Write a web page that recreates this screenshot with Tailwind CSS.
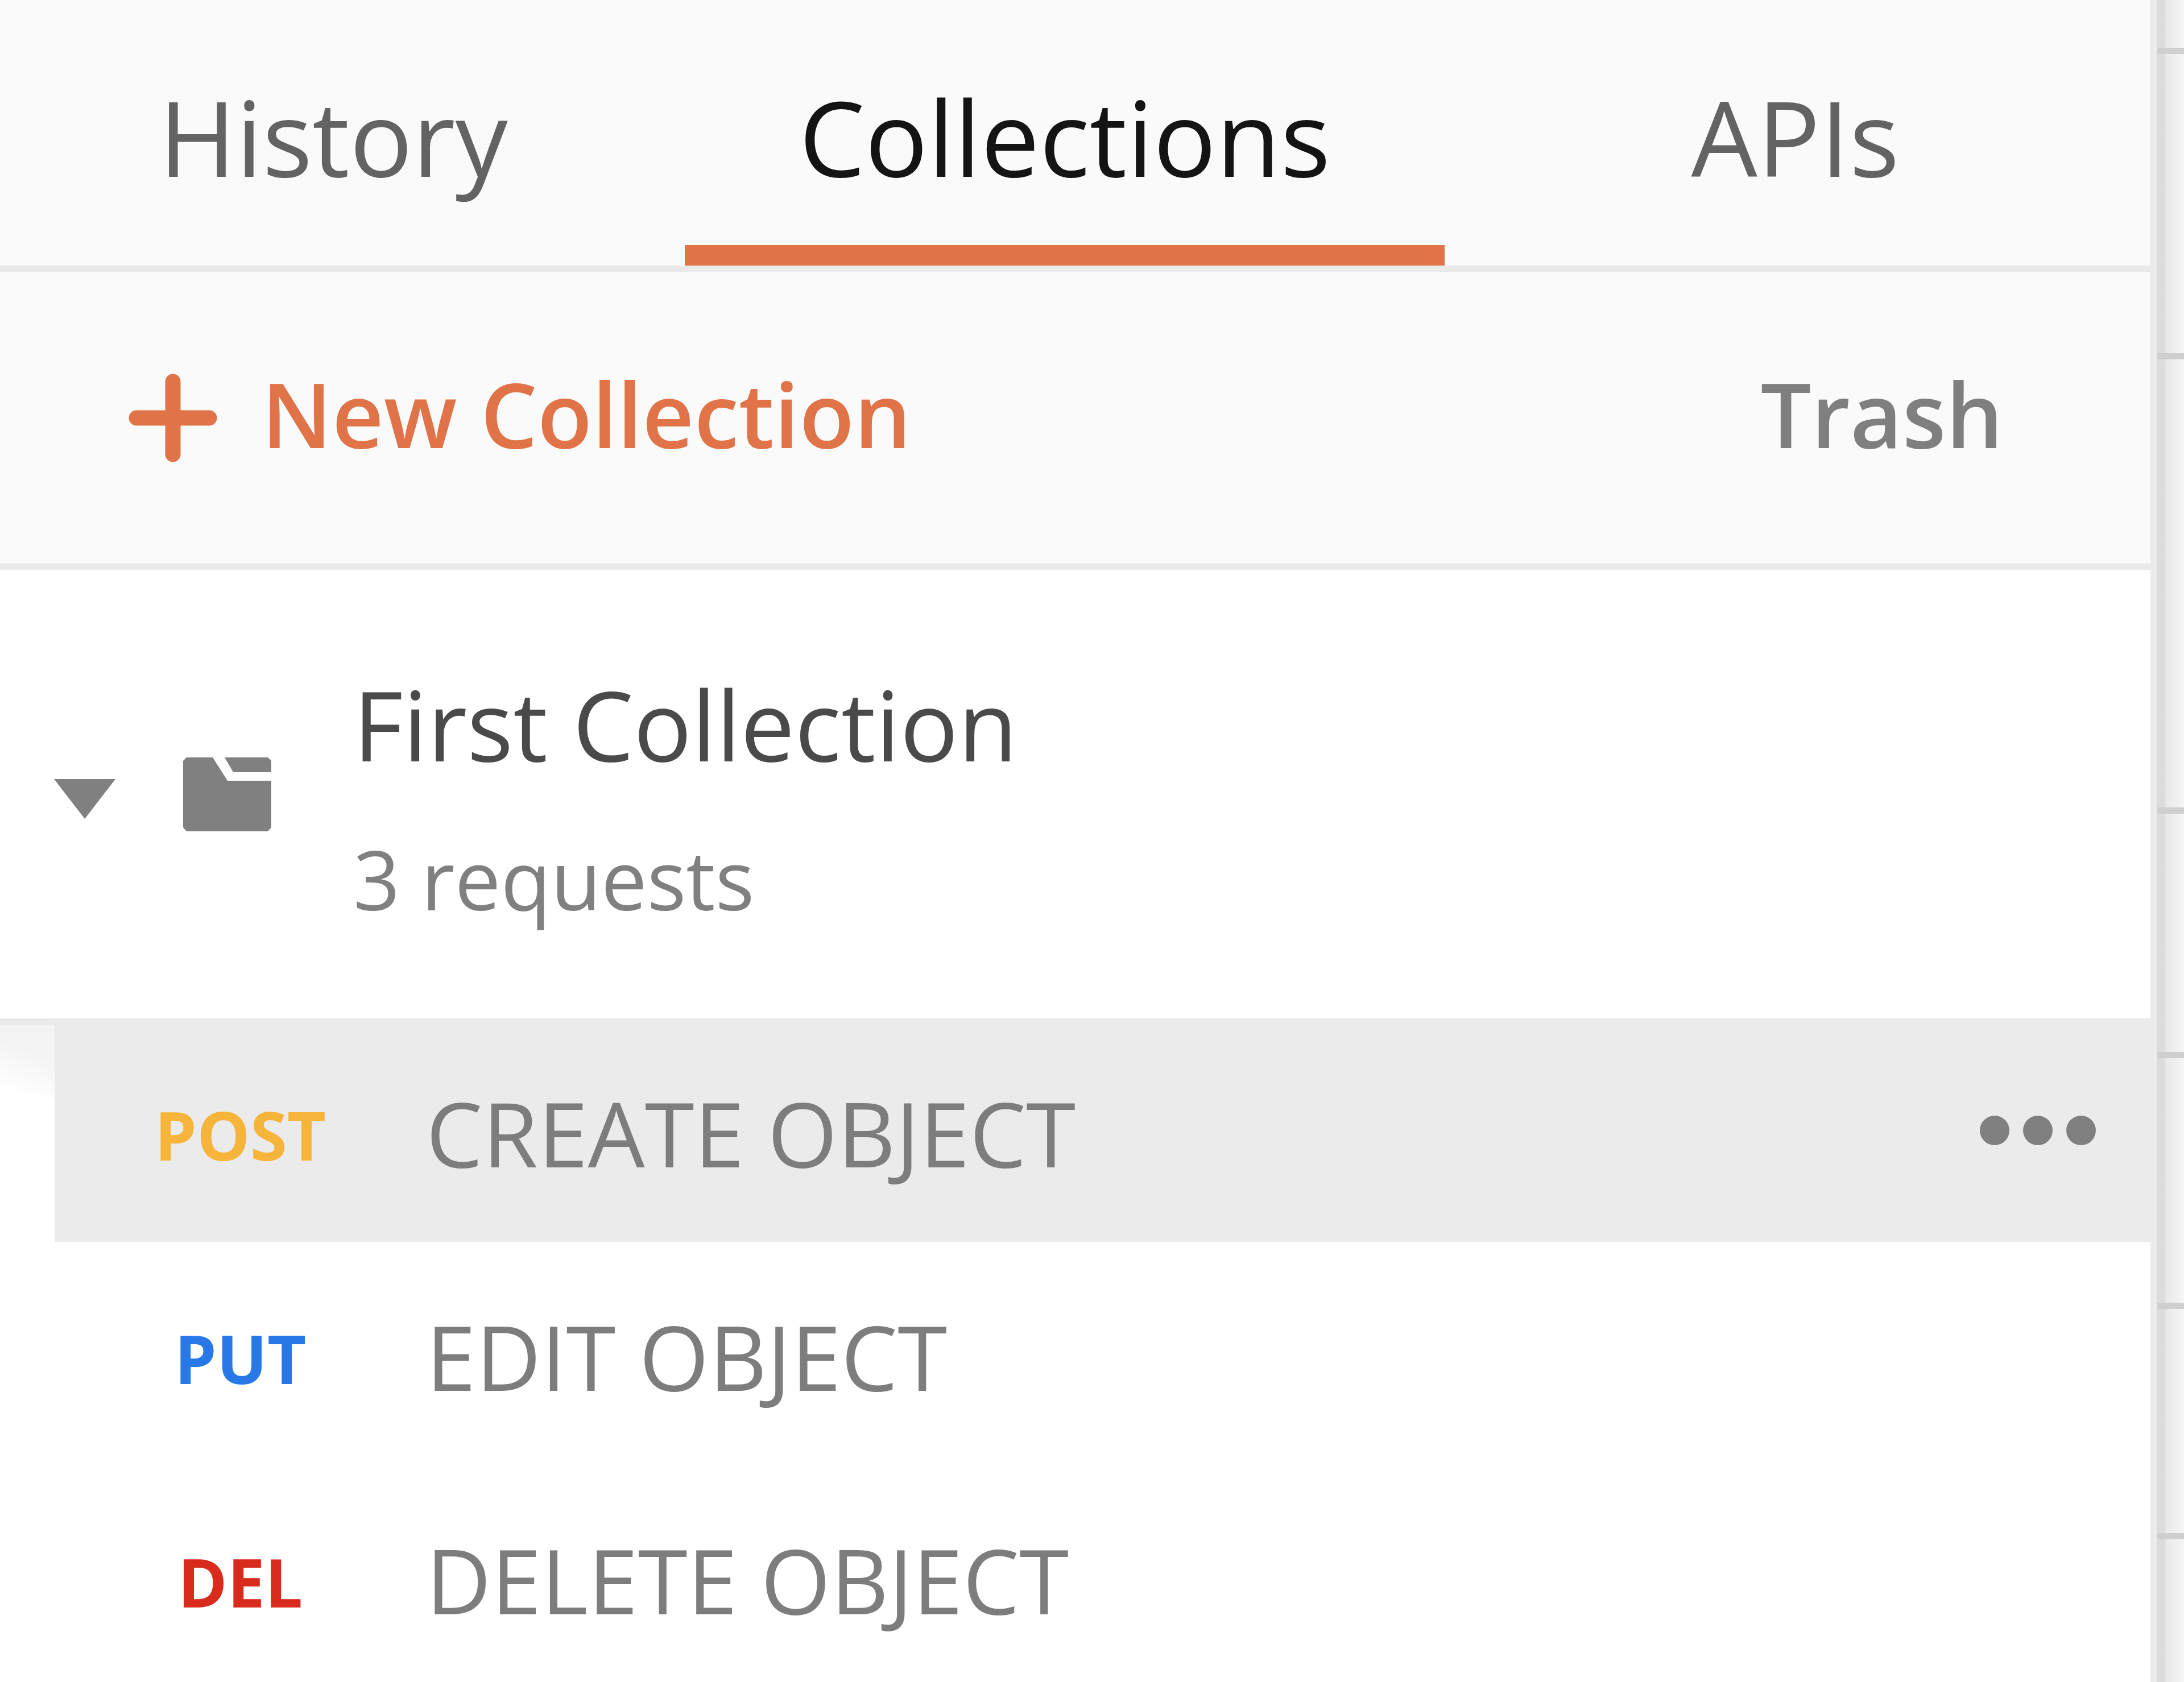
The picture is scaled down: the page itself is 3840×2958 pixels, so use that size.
<!DOCTYPE html>
<html lang="en">
<head>
    <meta charset="UTF-8">
    <meta name="viewport" content="width=device-width, initial-scale=1.0">
    <title>Collections</title>
    <script src="https://cdn.jsdelivr.net/npm/@tailwindcss/browser@4"></script>
</head>
<body class="flex h-screen overflow-hidden bg-white font-['Open_Sans','Noto_Sans',sans-serif]">
    <aside class="flex-1 min-w-0">
        <nav class="grid grid-cols-[1204fr_1336fr_1241fr] bg-[#fafafa] border-b-[11px] border-[#eaeaea] text-[184px] leading-[224px] text-[#636363]">
            <a href="#" class="pt-32 pr-8 text-center">History</a>
            <a href="#" class="pt-32 pb-[79px] text-center text-[#141414] border-b-[36px] border-[#e07347]">Collections</a>
            <a href="#" class="pt-32 pr-2 text-center">APIs</a>
        </nav>

        <div class="flex items-center justify-between h-[524px] pl-[226px] pr-[259px] bg-[#fafafa] border-b-[11px] border-[#eaeaea] text-[158px] leading-[220px] font-semibold">
            <button class="flex items-center gap-[78px] text-[#e07347]">
                <svg class="size-[156px]" viewBox="0 0 156 156" fill="none" stroke="currentColor" stroke-width="27" stroke-linecap="round">
                    <path d="M78 14v128M14 78h128"/>
                </svg>
                <span class="pb-4">New Collection</span>
            </button>
            <button class="pb-4 text-[#7f7f7f]">Trash</button>
        </div>

        <div class="flex items-center h-[800px] pl-[95px] border-b-[11px] border-[#eaeaea] text-[#808080]">
            <button aria-label="Collapse" class="pt-4">
                <svg class="w-[108px] h-[70px]" viewBox="0 0 108 70" fill="currentColor">
                    <path d="M0 0h108L54 70z"/>
                </svg>
            </button>
            <svg class="w-[155px] h-[130px] ml-[119px]" viewBox="0 0 155 130" fill="currentColor">
                <path d="M6 0h46l26 41h77v82l-6 7H6l-6-7V6z"/>
                <path d="M73 0h76l6 6v20H88z"/>
            </svg>
            <div class="ml-[144px] pt-6 leading-[272px]">
                <h2 class="text-[170px] text-[#4a4a4a]">First Collection</h2>
                <p class="text-[144px]">3 requests</p>
            </div>
        </div>

        <div class="flex">
            <div class="w-24 h-32 bg-linear-200 from-[#f3f3f3] from-35% to-white to-90%"></div>
            <ul class="flex-1 -mt-[11px] text-[158px] text-[#7d7d7d]">
                <li class="flex items-center h-[393px] bg-[#ebebeb]">
                    <span class="w-[653px] pt-4 text-center text-[118px] font-bold text-[#f6b43a]">POST</span>
                    <a href="#" class="flex-1 pt-2">CREATE OBJECT</a>
                    <button aria-label="More actions" class="mr-24">
                        <svg class="w-[204px] h-[52px]" viewBox="0 0 204 52" fill="#808080">
                            <circle cx="26" cy="26" r="26"/>
                            <circle cx="102" cy="26" r="26"/>
                            <circle cx="178" cy="26" r="26"/>
                        </svg>
                    </button>
                </li>
                <li class="flex items-center h-[393px]">
                    <span class="w-[653px] pt-4 text-center text-[118px] font-bold text-[#2878e8]">PUT</span>
                    <a href="#" class="flex-1 pt-2">EDIT OBJECT</a>
                </li>
                <li class="flex items-center h-[393px]">
                    <span class="w-[653px] pt-4 text-center text-[118px] font-bold text-[#d92b1c]">DEL</span>
                    <a href="#" class="flex-1 pt-2">DELETE OBJECT</a>
                </li>
            </ul>
        </div>
    </aside>

    <!-- edge of the request pane -->
    <div class="w-3 bg-[#ebebeb]"></div>
    <div class="w-[47px] bg-linear-to-r from-[#dcdcdc] from-25% via-[#eaeaea] via-35% to-[#f5f5f5]">
        <div class="h-[95px] border-b-[11px] border-[#cfcfcf]"></div>
        <div class="h-[537px] border-b-[11px] border-[#cfcfcf]"></div>
        <div class="h-[799px] border-b-[11px] border-[#cfcfcf]"></div>
        <div class="h-[430px] border-b-[11px] border-[#cfcfcf]"></div>
        <div class="h-[441px] border-b-[11px] border-[#cfcfcf]"></div>
        <div class="h-[405px] border-b-[11px] border-[#cfcfcf]"></div>
    </div>
</body>
</html>
